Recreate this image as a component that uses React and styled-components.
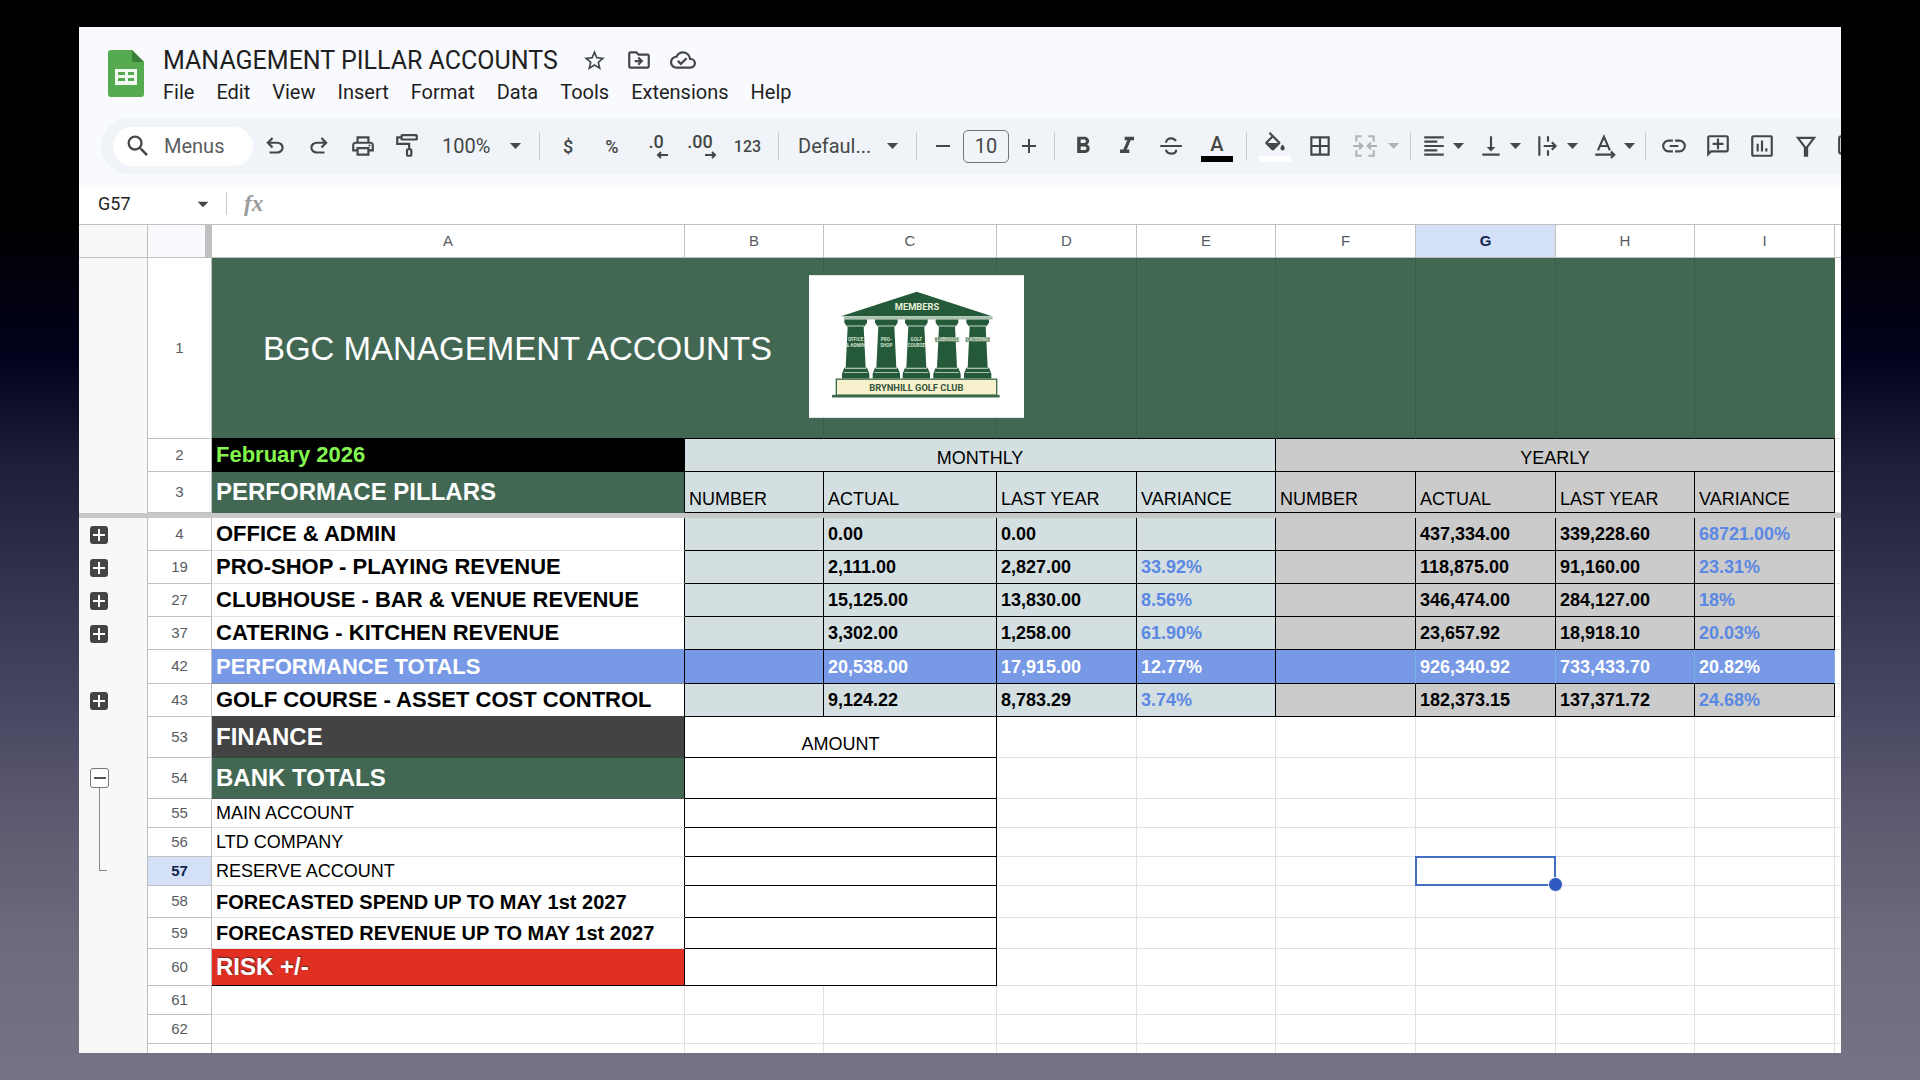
import React, { useState } from 'react'
import styled, { createGlobalStyle } from 'styled-components'
import {
  MdArrowDropDown,
  MdBorderAll,
  MdFormatAlignLeft,
  MdFormatBold,
  MdFormatItalic,
  MdOutlineAddComment,
  MdOutlineCloudDone,
  MdOutlineDriveFileMove,
  MdOutlinePrint,
  MdSearch,
  MdStarOutline,
  MdVerticalAlignBottom
} from 'react-icons/md'

const GREEN = '#426854'
const MINT = '#d3dfe0'
const GREY = '#cbcbcb'
const BLUE = '#7899e6'
const LINK = '#5b88e4'
const LINE = '#e1e1e1'

const menus = ['File', 'Edit', 'View', 'Insert', 'Format', 'Data', 'Tools', 'Extensions', 'Help']

const columns = [
  { name: 'A', width: 473 },
  { name: 'B', width: 139 },
  { name: 'C', width: 173 },
  { name: 'D', width: 140 },
  { name: 'E', width: 139 },
  { name: 'F', width: 140 },
  { name: 'G', width: 140 },
  { name: 'H', width: 139 },
  { name: 'I', width: 140 }
]

const headings = ['NUMBER', 'ACTUAL', 'LAST YEAR', 'VARIANCE']

const pillars = [
  { row: 4, h: 33, name: 'OFFICE & ADMIN', values: ['', '0.00', '0.00', '', '', '437,334.00', '339,228.60', '68721.00%'], line: LINE },
  { row: 19, h: 33, name: 'PRO-SHOP - PLAYING REVENUE', values: ['', '2,111.00', '2,827.00', '33.92%', '', '118,875.00', '91,160.00', '23.31%'], line: LINE },
  { row: 27, h: 33, name: 'CLUBHOUSE - BAR & VENUE REVENUE', values: ['', '15,125.00', '13,830.00', '8.56%', '', '346,474.00', '284,127.00', '18%'], line: LINE },
  { row: 37, h: 33, name: 'CATERING - KITCHEN REVENUE', values: ['', '3,302.00', '1,258.00', '61.90%', '', '23,657.92', '18,918.10', '20.03%'], line: BLUE },
  { row: 42, h: 34, name: 'PERFORMANCE TOTALS', values: ['', '20,538.00', '17,915.00', '12.77%', '', '926,340.92', '733,433.70', '20.82%'], line: '#8a8a8a', total: true },
  { row: 43, h: 33, name: 'GOLF COURSE - ASSET COST CONTROL', values: ['', '9,124.22', '8,783.29', '3.74%', '', '182,373.15', '137,371.72', '24.68%'], line: '#434343' }
]

const finance = [
  { row: 53, h: 41, name: 'FINANCE', amount: 'AMOUNT', bg: '#434343', color: '#fff', size: 24, bold: true, line: '#2f4a3d' },
  { row: 54, h: 41, name: 'BANK TOTALS', bg: GREEN, color: '#fff', size: 24, bold: true, line: '#555' },
  { row: 55, h: 29, name: 'MAIN ACCOUNT', size: 18 },
  { row: 56, h: 29, name: 'LTD COMPANY', size: 18 },
  { row: 57, h: 29, name: 'RESERVE ACCOUNT', size: 18, selected: true },
  { row: 58, h: 32, name: 'FORECASTED SPEND UP TO MAY 1st 2027', size: 20, bold: true },
  { row: 59, h: 31, name: 'FORECASTED REVENUE UP TO MAY 1st 2027', size: 20, bold: true },
  { row: 60, h: 37, name: 'RISK +/-', bg: '#e13022', color: '#fff', size: 24, bold: true, line: '#000', shadow: true }
]

const emptyRows = [61, 62, '']

const SheetsLogo = () => (
  <svg width="36" height="48" viewBox="0 0 36 48">
    <path d="M3 0h21l12 12v32a3 3 0 0 1-3 3H3a3 3 0 0 1-3-3V3a3 3 0 0 1 3-3z" fill="#56ab50" />
    <path d="M24 0l12 12H26a2 2 0 0 1-2-2z" fill="#3a7f3a" />
    <rect x="7" y="19" width="22" height="16" fill="#f1fbef" />
    <path d="M10 22h7v3h-7zM20 22h6v3h-6zM10 28h7v3h-7zM20 28h6v3h-6z" fill="#56ab50" />
  </svg>
)

const Caret = () => (
  <svg width="11" height="6" fill="currentColor">
    <path d="M0 0h11L5.500 6z" />
  </svg>
)

const UndoIcon = ({ flip }) => (
  <svg width="26" height="26" viewBox="0 -960 960 960" fill="currentColor">
    <path
      transform={flip ? 'translate(960 0) scale(-1 1)' : undefined}
      d="M280-200v-80h284q63 0 109.5-40T720-420q0-60-46.5-100T564-560H312l104 104-56 56-200-200 200-200 56 56-104 104h252q97 0 169.5 63T800-420q0 94-72.5 157T564-200H280Z"
    />
  </svg>
)

const PaintIcon = () => (
  <svg width="26" height="26" viewBox="0 0 24 24" fill="none" stroke="currentColor" strokeWidth="2">
    <rect x="7" y="2" width="14" height="4" rx="0.5" />
    <path d="M7 4H3v6h11v5" />
    <rect x="12" y="15" width="4" height="6" rx="1" />
  </svg>
)

const StrikeIcon = () => (
  <svg width="26" height="26" viewBox="0 0 24 24" fill="none" stroke="currentColor" strokeWidth="2">
    <path d="M2 12h20M7.500 9c0-2.500 2-4 4.500-4 2.200 0 3.800 1 4.400 2.600M7.300 15.500c.5 2.200 2.300 3.500 4.900 3.500 2.700 0 4.600-1.300 4.600-3.600" />
  </svg>
)

const FillIcon = () => (
  <svg width="26" height="24" viewBox="0 0 24 22" fill="currentColor">
    <path d="M16.560 8.940L7.620 0 6.210 1.410l2.380 2.380-5.150 5.150a1.490 1.490 0 000 2.120l5.500 5.500c.29.29.68.44 1.060.44s.77-.15 1.060-.44l5.500-5.500c.59-.58.59-1.530 0-2.120zM5.210 10L10 5.210 14.790 10H5.210zM19 11.500s-2 2.170-2 3.500c0 1.100.9 2 2 2s2-.9 2-2c0-1.330-2-3.500-2-3.500z" />
  </svg>
)

const MergeIcon = () => (
  <svg width="26" height="26" viewBox="0 0 24 24" fill="none" stroke="currentColor" strokeWidth="2">
    <path d="M9 3H4v5M15 3h5v5M9 21H4v-5M15 21h5v-5M1 12h8M23 12h-8M6.500 9l3 3-3 3M17.500 9l-3 3 3 3" />
  </svg>
)

const WrapIcon = () => (
  <svg width="26" height="26" viewBox="0 0 24 24" fill="none" stroke="currentColor" strokeWidth="2">
    <path d="M4 3v18M12 3v5M12 16v5M8 12h11M15.500 8.500L19 12l-3.500 3.500" />
  </svg>
)

const RotateIcon = () => (
  <svg width="26" height="26" viewBox="0 0 24 24" fill="none" stroke="currentColor" strokeWidth="2">
    <path d="M5.500 16L11 3.500 16.500 16M7.500 12h7M3 20h17M17.500 17l3 3-3 3" />
  </svg>
)

const LinkIcon = () => (
  <svg width="26" height="26" viewBox="0 0 24 24" fill="none" stroke="currentColor" strokeWidth="2">
    <path d="M11 7H7a5 5 0 0 0 0 10h4M13 7h4a5 5 0 0 1 0 10h-4M8 12h8" />
  </svg>
)

const ChartIcon = () => (
  <svg width="26" height="26" viewBox="0 0 24 24" fill="none" stroke="currentColor" strokeWidth="2">
    <rect x="3" y="3" width="18" height="18" rx="1" />
    <path d="M8 10v7M12 7v10M16 14v3" />
  </svg>
)

const FilterIcon = () => (
  <svg width="26" height="26" viewBox="0 0 24 24" fill="none" stroke="currentColor" strokeWidth="2">
    <path d="M4.500 4.500h15L13 13v8h-2v-8z" />
  </svg>
)

const DecimalArrow = ({ right }) => (
  <svg width="12" height="8" viewBox="0 0 12 8" fill="none" stroke="currentColor" strokeWidth="2">
    <path d={right ? 'M0 4h10M7 1l3 3-3 3' : 'M12 4H2M5 1L2 4l3 3'} />
  </svg>
)

const pillarLabels = [
  { x: 197, lines: ['OFFICE', '& ADMIN'] },
  { x: 289, lines: ['PRO-', 'SHOP'] },
  { x: 379, lines: ['GOLF', 'COURSE'] },
  { x: 471, lines: ['CLUBHOUSE'] },
  { x: 563, lines: ['CATERING'] }
]

const ClubLogo = () => (
  <svg width="215" height="143" viewBox="57 44 645 428" fontFamily="Roboto, sans-serif" fontWeight="700">
    <rect x="57" y="44" width="645" height="428" fill="#fff" />
    <path d="M380 94L606 167H153z" fill="#24593a" />
    <rect x="162" y="168" width="446" height="9" fill="#a9c0ae" />
    <text x="381" y="149" fontSize="28" textAnchor="middle" fill="#e9f0d8">MEMBERS</text>
    {pillarLabels.map(({ x, lines }) => (
      <g key={x}>
        <path d={`M${x - 34} 177h68v10l-8 11h-52l-8-11z`} fill="#24593a" />
        <path d={`M${x - 24} 198h48l6 124h-60z`} fill="#24593a" />
        <path d={`M${x - 26} 196h52`} stroke="#a9c0ae" strokeWidth="3" />
        <path d={`M${x - 34} 322h68l7 18v14h-82v-14z`} fill="#24593a" />
        <path d={`M${x - 32} 324h64M${x - 36} 336h72`} stroke="#a9c0ae" strokeWidth="3" />
        {lines.length === 1 && <rect x={x - 36} y="230" width="72" height="14" fill="#5d8468" />}
        {lines.map((line, i) => (
          <text key={line} x={x} y={242 + i * 17} fontSize="14" textAnchor="middle" fill="#d5e0cc">{line}</text>
        ))}
      </g>
    ))}
    <rect x="139" y="356" width="481" height="48" fill="#f8f1cd" stroke="#3d6a4c" strokeWidth="4" />
    <rect x="126" y="403" width="503" height="8" fill="#3d6a4c" />
    <text x="379" y="390" fontSize="28" textAnchor="middle" fill="#33553a">BRYNHILL GOLF CLUB</text>
  </svg>
)

const Toolbar = () => {
  const [size, setSize] = useState(10)

  return (
    <ToolbarRow>
      <SearchBox>
        <MdSearch size={28} />
        <SearchInput placeholder="Menus" aria-label="Menus" />
      </SearchBox>
      <Tool aria-label="Undo"><UndoIcon /></Tool>
      <Tool aria-label="Redo"><UndoIcon flip /></Tool>
      <Tool aria-label="Print"><MdOutlinePrint size={26} /></Tool>
      <Tool aria-label="Paint format"><PaintIcon /></Tool>
      <SelectWrap $width={105}>
        <Select aria-label="Zoom"><option>100%</option></Select>
        <Caret />
      </SelectWrap>
      <Divider />
      <Tool aria-label="Currency">$</Tool>
      <Tool aria-label="Percent">%</Tool>
      <Tool aria-label="Decrease decimals">
        <Decimal>.0<DecimalArrow /></Decimal>
      </Tool>
      <Tool aria-label="Increase decimals">
        <Decimal>.00<DecimalArrow right /></Decimal>
      </Tool>
      <Tool $width={51} $size={16} aria-label="More formats">123</Tool>
      <Divider />
      <SelectWrap $width={126}>
        <Select aria-label="Font"><option>Defaul...</option></Select>
        <Caret />
      </SelectWrap>
      <Divider />
      <Stepper aria-label="Decrease font size" onClick={() => setSize(size - 1)}>
        <svg width="14" height="14" stroke="currentColor" strokeWidth="2"><path d="M0 7h14" /></svg>
      </Stepper>
      <SizeInput aria-label="Font size" value={size} onChange={(e) => setSize(Number(e.target.value))} />
      <Stepper aria-label="Increase font size" onClick={() => setSize(size + 1)}>
        <svg width="14" height="14" stroke="currentColor" strokeWidth="2"><path d="M0 7h14M7 0v14" /></svg>
      </Stepper>
      <Divider />
      <Tool aria-label="Bold"><MdFormatBold size={28} /></Tool>
      <Tool aria-label="Italic"><MdFormatItalic size={28} /></Tool>
      <Tool aria-label="Strikethrough"><StrikeIcon /></Tool>
      <Tool $width={48} aria-label="Text color">
        <Swatch $color="#000">A</Swatch>
      </Tool>
      <Divider />
      <Tool aria-label="Fill color">
        <Swatch $color="#fff"><FillIcon /></Swatch>
      </Tool>
      <Tool $width={46} aria-label="Borders"><MdBorderAll size={26} /></Tool>
      <MenuTool $muted $width={62} $gap={10} aria-label="Merge cells"><MergeIcon /><Caret /></MenuTool>
      <Divider />
      <MenuTool aria-label="Horizontal align"><MdFormatAlignLeft size={26} /><Caret /></MenuTool>
      <MenuTool aria-label="Vertical align"><MdVerticalAlignBottom size={26} /><Caret /></MenuTool>
      <MenuTool aria-label="Text wrapping"><WrapIcon /><Caret /></MenuTool>
      <MenuTool $width={52} aria-label="Text rotation"><RotateIcon /><Caret /></MenuTool>
      <Divider />
      <Tool aria-label="Insert link"><LinkIcon /></Tool>
      <Tool aria-label="Insert comment">
        <Mirror><MdOutlineAddComment size={26} /></Mirror>
      </Tool>
      <Tool aria-label="Insert chart"><ChartIcon /></Tool>
      <Tool aria-label="Create filter"><FilterIcon /></Tool>
      <Tool aria-label="Filter views">
        <svg width="26" height="26" viewBox="0 0 24 24" fill="none" stroke="currentColor" strokeWidth="2">
          <rect x="2" y="3" width="18" height="16" rx="2" />
        </svg>
      </Tool>
    </ToolbarRow>
  )
}

const Group = () => (
  <GroupCell>
    <Expand aria-label="Expand group">
      <svg width="12" height="12" stroke="#fff" strokeWidth="2"><path d="M0 6h12M6 0v12" /></svg>
    </Expand>
  </GroupCell>
)

const Grid = () => (
  <Table>
    <colgroup>
      <col style={{ width: 69 }} />
      <col style={{ width: 64 }} />
      {columns.map((c) => <col key={c.name} style={{ width: c.width }} />)}
      <col />
    </colgroup>
    <thead>
      <Row $h={33}>
        <GroupCell $b="#c0c0c0" />
        <Corner />
        {columns.map((c) => (
          <ColHead key={c.name} scope="col" $active={c.name === 'G'}>{c.name}</ColHead>
        ))}
        <ColHead as="td" $last />
      </Row>
    </thead>
    <tbody>
      <Row $h={181}>
        <GroupCell />
        <RowHead scope="row">1</RowHead>
        <Cell colSpan={2} $bg={GREEN} $color="#fff" $size={33} $align="center" $r="#3a5c4b" $b="#000">
          BGC MANAGEMENT ACCOUNTS
        </Cell>
        <Cell $bg={GREEN} $r="#3a5c4b" $b="#000">
          <Floating><ClubLogo /></Floating>
        </Cell>
        {['D', 'E', 'F', 'G', 'H', 'I'].map((c) => (
          <Cell key={c} $bg={GREEN} $r={c === 'I' ? GREEN : '#3a5c4b'} $b="#000" />
        ))}
        <Cell $r="transparent" />
      </Row>
      <Row $h={33}>
        <GroupCell />
        <RowHead scope="row">2</RowHead>
        <Cell $bg="#000" $color="#84f54f" $size={22} $bold $r="#000" $b="#000">February 2026</Cell>
        <Cell colSpan={4} $bg={MINT} $align="center" $valign="bottom" $r="#000" $b="#000">MONTHLY</Cell>
        <Cell colSpan={4} $bg={GREY} $align="center" $valign="bottom" $r="#000" $b="#000">YEARLY</Cell>
        <Cell $r="transparent" />
      </Row>
      <Row $h={41}>
        <GroupCell />
        <RowHead scope="row">3</RowHead>
        <Cell $bg={GREEN} $color="#fff" $size={24} $bold $r="#000" $b={GREEN}>PERFORMACE PILLARS</Cell>
        {[MINT, GREY].map((bg) => headings.map((h) => (
          <Cell key={bg + h} $bg={bg} $valign="bottom" $r="#000" $b="#000">{h}</Cell>
        )))}
        <Cell $r="transparent" />
      </Row>
      <tr>
        <FreezeBar colSpan={12} />
      </tr>
      {pillars.map((p) => (
        <Row key={p.row} $h={p.h}>
          {p.total ? <GroupCell /> : <Group />}
          <RowHead scope="row">{p.row}</RowHead>
          <Cell $bg={p.total ? BLUE : '#fff'} $color={p.total ? '#fff' : '#000'} $size={22} $bold $r="#000" $b={p.line}>
            {p.name}
          </Cell>
          {p.values.map((v, i) => (
            <Cell
              key={i}
              $bold
              $bg={p.total ? BLUE : i < 4 ? MINT : GREY}
              $color={p.total ? '#fff' : v.endsWith('%') ? LINK : '#000'}
              $r={p.total && i > 3 ? '#76b0e4' : '#000'}
              $b="#000"
            >
              {v}
            </Cell>
          ))}
          <Cell $r="transparent" />
        </Row>
      ))}
      {finance.map((f) => (
        <Row key={f.row} $h={f.h}>
          {f.row === 54 && (
            <GroupCell rowSpan={4} $top>
              <Bracket>
                <Collapse aria-label="Collapse group">
                  <svg width="12" height="12" stroke="#555" strokeWidth="2"><path d="M0 6h12" /></svg>
                </Collapse>
                <BracketLine />
              </Bracket>
            </GroupCell>
          )}
          {(f.row < 54 || f.row > 57) && <GroupCell />}
          <RowHead scope="row" $active={f.selected}>{f.row}</RowHead>
          <Cell $bg={f.bg} $color={f.color} $size={f.size} $bold={f.bold} $shadow={f.shadow} $r="#000" $b={f.line}>
            {f.name}
          </Cell>
          <Cell colSpan={2} $align="center" $valign="bottom" $r="#000" $b="#000">{f.amount}</Cell>
          {['D', 'E', 'F', 'G', 'H', 'I'].map((c) => (
            <Cell key={c}>{f.selected && c === 'G' && <Selection />}</Cell>
          ))}
          <Cell $r="transparent" />
        </Row>
      ))}
      {emptyRows.map((n) => (
        <Row key={n} $h={29}>
          <GroupCell />
          <RowHead scope="row">{n}</RowHead>
          {columns.map((c) => <Cell key={c.name} />)}
          <Cell $r="transparent" />
        </Row>
      ))}
    </tbody>
  </Table>
)

const App = () => {
  return (
    <Desktop>
      <GlobalStyle />
      <Window>
        <Header>
          <TitleBar>
            <SheetsLogo />
            <div>
              <TitleRow>
                <Title>MANAGEMENT PILLAR ACCOUNTS</Title>
                <IconButton aria-label="Star"><MdStarOutline size={25} /></IconButton>
                <IconButton aria-label="Move"><MdOutlineDriveFileMove size={26} /></IconButton>
                <IconButton aria-label="Saved to Drive"><MdOutlineCloudDone size={26} /></IconButton>
              </TitleRow>
              <Menu>
                {menus.map((m) => <MenuItem key={m}>{m}</MenuItem>)}
              </Menu>
            </div>
          </TitleBar>
          <Toolbar />
        </Header>
        <FormulaBar>
          <NameBox aria-label="Name box" defaultValue="G57" />
          <MdArrowDropDown size={26} />
          <FormulaDivider />
          <Fx>fx</Fx>
          <FormulaInput aria-label="Formula" />
        </FormulaBar>
        <Grid />
      </Window>
    </Desktop>
  )
}

const GlobalStyle = createGlobalStyle`
  * {
    box-sizing: border-box;
  }
  body {
    margin: 0;
    font-family: "Liberation Sans", Arial, sans-serif;
  }
  button, input, select {
    font-family: inherit;
    border: none;
    background: none;
    padding: 0;
    margin: 0;
    color: inherit;
  }
  svg {
    display: block;
    flex: none;
  }
`

const Desktop = styled.div`
  height: 100vh;
  padding: 27px 79px;
  background: linear-gradient(#000 20%, #02021c 33%, #1c1b38 42%, #3e3d5a 60%, #5a596f 75%, #6c6b7c 87%, #757486 100%);
`
const Window = styled.main`
  height: 100%;
  overflow: hidden;
  background: #fff;
`
const Header = styled.header`
  background: #f8fafe;
  padding: 16px 0 11px;
  font-family: Roboto, sans-serif;
`
const TitleBar = styled.div`
  display: flex;
  gap: 19px;
  padding-left: 29px;

  > svg {
    margin-top: 7px;
  }
`
const TitleRow = styled.div`
  display: flex;
  align-items: center;
  height: 34px;
`
const Title = styled.h1`
  margin: 0 15px 0 0;
  font-size: 25px;
  font-weight: 400;
  color: #1f1f1f;
`
const IconButton = styled.button`
  display: flex;
  justify-content: center;
  width: 44px;
  color: #444746;
`
const Menu = styled.nav`
  display: flex;
  align-items: center;
  gap: 22px;
  height: 30px;
`
const MenuItem = styled.button`
  font-size: 20px;
  color: #1f1f1f;
`
const ToolbarRow = styled.div`
  display: flex;
  align-items: center;
  height: 56px;
  margin: 11px 0 0 22px;
  padding-left: 12px;
  border-radius: 28px 0 0 28px;
  background: #f0f4f9;
  color: #444746;
  overflow: hidden;
`
const SearchBox = styled.label`
  display: flex;
  flex: none;
  align-items: center;
  gap: 12px;
  width: 140px;
  height: 39px;
  padding-left: 11px;
  border-radius: 20px;
  background: #fff;
`
const SearchInput = styled.input`
  width: 70px;
  font-size: 20px;
  outline: none;

  &::placeholder {
    color: #5a5d61;
    opacity: 1;
  }
`
const Tool = styled.button`
  display: flex;
  flex: none;
  align-items: center;
  justify-content: center;
  width: ${({ $width }) => $width || 44}px;
  height: 44px;
  font-size: ${({ $size }) => $size || 18}px;
  font-weight: 500;
`
const MenuTool = styled.button`
  display: flex;
  flex: none;
  align-items: center;
  gap: ${({ $gap }) => $gap || 6}px;
  width: ${({ $width }) => $width || 57}px;
  height: 44px;
  padding-left: ${({ $muted }) => ($muted ? 9 : 4)}px;
  color: ${({ $muted }) => ($muted ? '#b0b3b6' : 'inherit')};
`
const Mirror = styled.span`
  transform: scaleX(-1);
`
const Decimal = styled.span`
  display: flex;
  flex-direction: column;
  align-items: flex-start;
  line-height: 18px;

  svg {
    align-self: flex-end;
    margin-right: -4px;
  }
`
const Swatch = styled.span`
  display: flex;
  align-items: flex-end;
  justify-content: center;
  width: 32px;
  height: 32px;
  border-bottom: 6px solid ${({ $color }) => $color};
  font-size: 20px;
`
const SelectWrap = styled.span`
  display: flex;
  flex: none;
  align-items: center;
  justify-content: space-between;
  width: ${({ $width }) => $width}px;
  padding: 0 13px 0 13px;
`
const Select = styled.select`
  appearance: none;
  font-size: 20px;
  outline: none;
`
const Divider = styled.span`
  flex: none;
  width: 1px;
  height: 28px;
  margin: 0 6px 0 5px;
  background: #c7cacd;
`
const Stepper = styled.button`
  display: flex;
  flex: none;
  justify-content: center;
  width: 40px;
`
const SizeInput = styled.input`
  flex: none;
  width: 46px;
  height: 33px;
  border: 1px solid #747775;
  border-radius: 5px;
  font-size: 20px;
  text-align: center;
`
const FormulaBar = styled.div`
  display: flex;
  align-items: center;
  height: 40px;
  padding: 0 0 2px 19px;
  border-bottom: 1px solid #c0c0c0;
  color: #444746;
  font-family: Roboto, sans-serif;
`
const NameBox = styled.input`
  width: 92px;
  font-size: 18px;
  color: #1f1f1f;
`
const FormulaDivider = styled.span`
  width: 1px;
  height: 23px;
  margin: 0 17px 0 10px;
  background: #c7cacd;
`
const Fx = styled.span`
  font-family: "Liberation Serif", serif;
  font-size: 23px;
  font-style: italic;
  font-weight: 700;
  color: #999b9d;
`
const FormulaInput = styled.input`
  flex: 1;
  font-size: 18px;
`
const Table = styled.table`
  width: 100%;
  table-layout: fixed;
  border-collapse: separate;
  border-spacing: 0;
`
const Row = styled.tr`
  height: ${({ $h }) => $h}px;
`
const GroupCell = styled.td`
  padding: 0 0 0 11px;
  border-right: 1px solid #c0c0c0;
  border-bottom: ${({ $b }) => ($b ? `1px solid ${$b}` : 'none')};
  background: #f8f8f8;
  vertical-align: ${({ $top }) => ($top ? 'top' : 'middle')};
`
const Expand = styled.button`
  display: flex;
  align-items: center;
  justify-content: center;
  width: 18px;
  height: 18px;
  border-radius: 3px;
  background: #444;
`
const Bracket = styled.div`
  display: flex;
  flex-direction: column;
  padding-top: 10px;
`
const Collapse = styled(Expand)`
  width: 19px;
  height: 20px;
  border: 1px solid #777;
  background: #fff;
`
const BracketLine = styled.span`
  width: 8px;
  height: 83px;
  margin-left: 9px;
  border-left: 1px solid #888;
  border-bottom: 1px solid #888;
`
const Corner = styled.td`
  padding: 0;
  border-right: 7px solid #c0c0c0;
  border-bottom: 1px solid #c0c0c0;
  background: #f8f9fd;
`
const ColHead = styled.th`
  padding: 0 0 2px;
  border-right: ${({ $last }) => ($last ? 'none' : '1px solid #c0c0c0')};
  border-bottom: 1px solid #c0c0c0;
  background: ${({ $active }) => ($active ? '#d3e0f8' : '#fff')};
  color: ${({ $active }) => ($active ? '#14264f' : '#575b5f')};
  font-size: 15px;
  font-weight: ${({ $active }) => ($active ? 700 : 400)};
`
const RowHead = styled(ColHead)``

const Cell = styled.td`
  position: relative;
  padding: ${({ $valign }) => ($valign ? '0 4px 4px' : '0 4px')};
  border-right: 1px solid ${({ $r }) => $r || LINE};
  border-bottom: 1px solid ${({ $b }) => $b || LINE};
  background: ${({ $bg }) => $bg || '#fff'};
  color: ${({ $color }) => $color || '#000'};
  font-size: ${({ $size }) => $size || 18}px;
  font-weight: ${({ $bold }) => ($bold ? 700 : 400)};
  line-height: 1;
  text-align: ${({ $align }) => $align || 'left'};
  text-shadow: ${({ $shadow }) => ($shadow ? '1px -1px 1px #5a2a2a' : 'none')};
  vertical-align: ${({ $valign }) => $valign || 'middle'};
  white-space: nowrap;
`
const FreezeBar = styled.td`
  height: 5px;
  padding: 0;
  background: #c7c7c7;
`
const Floating = styled.div`
  position: absolute;
  top: 17px;
  left: -15px;
  z-index: 1;
`
const Selection = styled.span`
  position: absolute;
  inset: -1px;
  z-index: 1;
  border: 2px solid #4470c4;

  &::after {
    content: "";
    position: absolute;
    right: -9px;
    bottom: -8px;
    width: 13px;
    height: 13px;
    border: 1px solid #fff;
    border-radius: 50%;
    background: #2f58c0;
  }
`

export default App
